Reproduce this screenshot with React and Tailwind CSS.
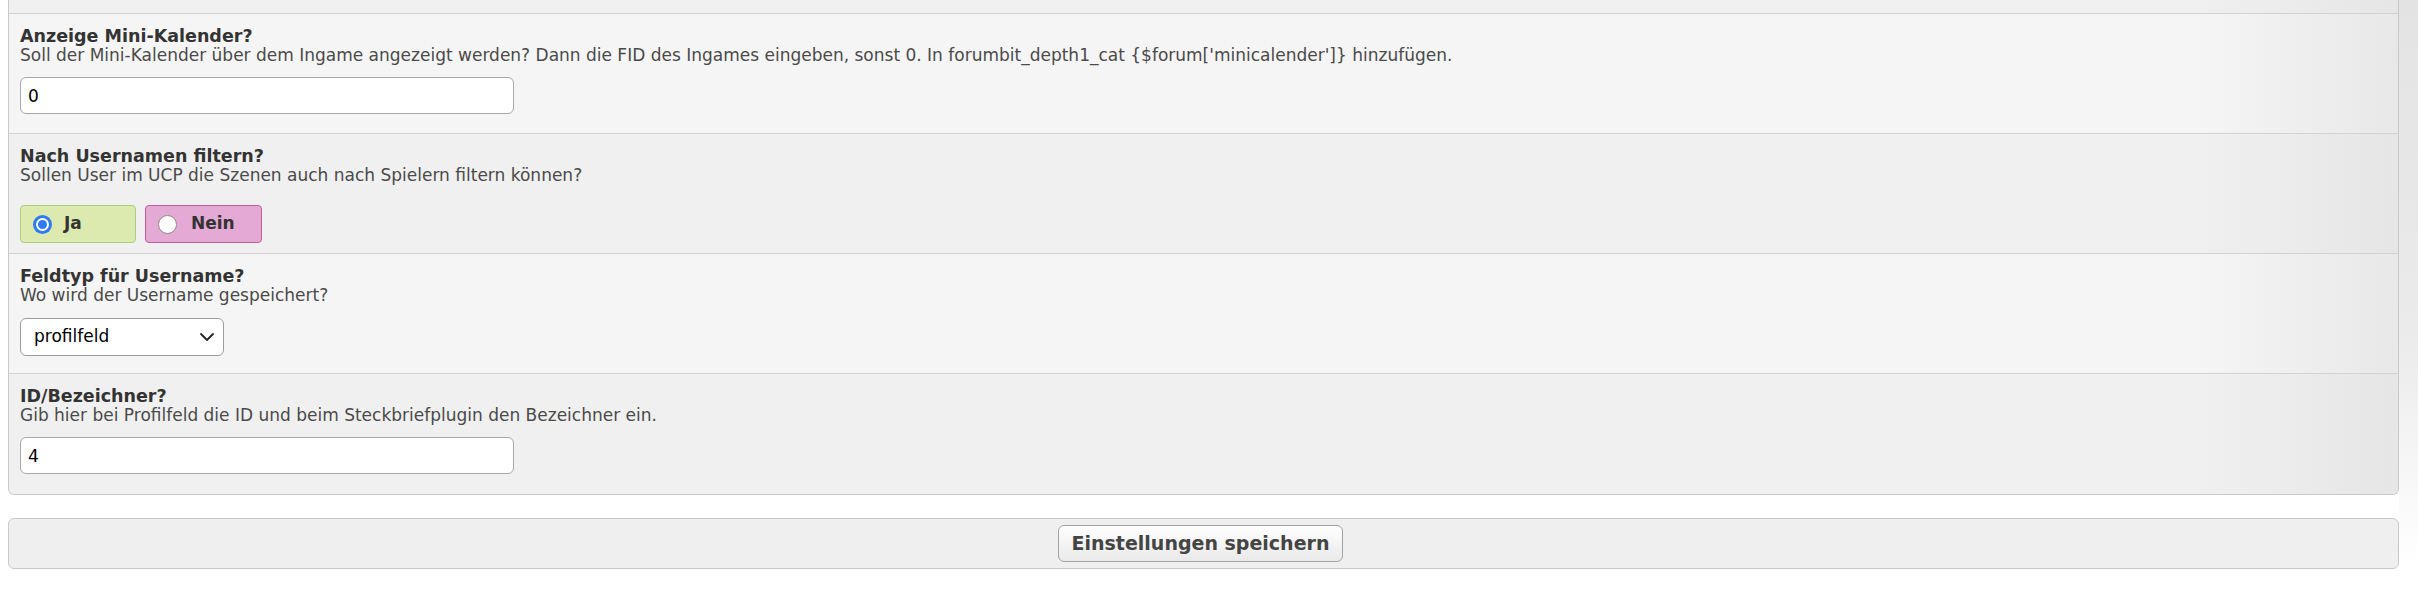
import React from "react";

function Row({ title, desc, alt, children, fieldGap, bottom }) {
  const bg = alt
    ? "bg-[linear-gradient(to_right,#f0f0f0_calc(100%-200px),#e6e6e6)]"
    : "bg-[linear-gradient(to_right,#f5f5f5_calc(100%-200px),#e8e8e8)]";
  return (
    <div className={`border-t border-[#d2d2d2] pl-[11px] pt-[14px] ${bg} ${bottom}`}>
      <div className="text-[17.5px] font-bold leading-[17px] text-[#333]">{title}</div>
      <div className="text-[17px] leading-[20px] text-[#4a4a4a]">{desc}</div>
      <div className={fieldGap}>{children}</div>
    </div>
  );
}

function TextBox({ value }) {
  return (
    <input
      readOnly
      value={value}
      className="h-[37px] w-[494px] rounded-[6px] border border-[#a8a8a8] bg-white px-[7px] text-[17px] text-black outline-none"
    />
  );
}

function Radio({ checked }) {
  if (checked) {
    return (
      <span className="flex h-[19px] w-[19px] items-center justify-center rounded-full bg-[#2f7bf5]">
        <span className="flex h-[13px] w-[13px] items-center justify-center rounded-full bg-white">
          <span className="h-[9px] w-[9px] rounded-full bg-[#2f7bf5]" />
        </span>
      </span>
    );
  }
  return <span className="h-[19px] w-[19px] rounded-full border border-[#8c8c8c] bg-white" />;
}

export default function App() {
  return (
    <div className="flex min-h-[614px] w-full bg-white font-['DejaVu_Sans','Liberation_Sans',sans-serif]">
      <div className="ml-[8px] w-[2391px] shrink-0">
        <div className="overflow-hidden rounded-b-[6px] border-x border-b border-[#c9c9c9]">
          <div className="h-[13px] bg-[linear-gradient(to_right,#f0f0f0_calc(100%-200px),#e6e6e6)]" />
          <Row
            title="Anzeige Mini-Kalender?"
            desc="Soll der Mini-Kalender über dem Ingame angezeigt werden? Dann die FID des Ingames eingeben, sonst 0. In forumbit_depth1_cat {$forum['minicalender']} hinzufügen."
            fieldGap="mt-[12px]"
            bottom="pb-[19px]"
          >
            <TextBox value="0" />
          </Row>
          <Row
            alt
            title="Nach Usernamen filtern?"
            desc="Sollen User im UCP die Szenen auch nach Spielern filtern können?"
            fieldGap="mt-[20px]"
            bottom="pb-[10px]"
          >
            <div className="flex gap-[9px]">
              <label className="flex h-[38px] w-[116px] items-center gap-[12px] rounded-[4px] border border-[#a9cf7f] bg-[#dceab0] pl-[12px] text-[17px] font-bold text-[#333]">
                <Radio checked />
                <span>Ja</span>
              </label>
              <label className="flex h-[38px] w-[117px] items-center gap-[14px] rounded-[4px] border border-[#c45a9c] bg-[#e4aad5] pl-[12px] text-[17px] font-bold text-[#333]">
                <Radio />
                <span>Nein</span>
              </label>
            </div>
          </Row>
          <Row
            title="Feldtyp für Username?"
            desc="Wo wird der Username gespeichert?"
            fieldGap="mt-[13px]"
            bottom="pb-[17px]"
          >
            <div className="flex h-[38px] w-[204px] items-center justify-between rounded-[6px] border border-[#9c9c9c] bg-white pl-[13px] pr-[7px] text-[17px] text-black">
              <span>profilfeld</span>
              <svg width="18" height="18" viewBox="0 0 18 18" fill="none">
                <path d="M3 6l6 6 6-6" stroke="#222" strokeWidth="1.8" strokeLinecap="round" strokeLinejoin="round" />
              </svg>
            </div>
          </Row>
          <Row
            alt
            title="ID/Bezeichner?"
            desc="Gib hier bei Profilfeld die ID und beim Steckbriefplugin den Bezeichner ein."
            fieldGap="mt-[12px]"
            bottom="pb-[20px]"
          >
            <TextBox value="4" />
          </Row>
        </div>
        <div className="mt-[23px] flex h-[51px] items-center justify-center rounded-[6px] border border-[#c9c9c9] bg-[#efefef]">
          <button className="-ml-[6px] h-[37px] w-[285px] rounded-[6px] border border-[#a3a3a3] bg-[linear-gradient(to_bottom,#ffffff,#e9e9e9)] text-[19px] font-bold text-[#444]">
            Einstellungen speichern
          </button>
        </div>
      </div>
      <div className="flex-1 bg-[linear-gradient(to_bottom,#e3e3e3,#ebebeb_55%,#ffffff_92%)]" />
    </div>
  );
}
